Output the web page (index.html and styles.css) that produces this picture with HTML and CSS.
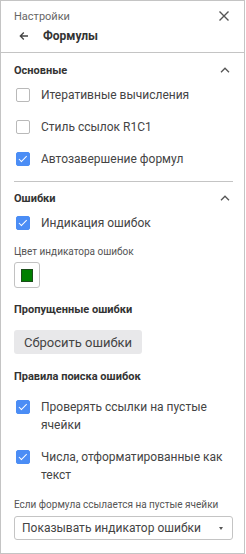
FILE: index.html
```html
<!DOCTYPE html>
<html lang="ru">
<head>
  <meta charset="UTF-8" />
  <meta name="viewport" content="width=device-width, initial-scale=1.0" />
  <title>Настройки — Формулы</title>
  <link rel="stylesheet" href="styles.css">
</head>
<body>
  <div class="panel">
    <div class="header">
      <div class="header-top">
        <span class="caption">Настройки</span>
        <svg class="icon-close" width="12" height="12" viewBox="0 0 12 12">
          <path d="M1.5 1.5L10.5 10.5M10.5 1.5L1.5 10.5" stroke="#555" stroke-width="1.4" fill="none"/>
        </svg>
      </div>
      <div class="header-title">
        <svg class="icon-back" width="10" height="10" viewBox="0 0 10 10">
          <path d="M9 5H1.5M4.8 1.5L1.3 5l3.5 3.5" stroke="#444" stroke-width="1.3" fill="none"/>
        </svg>
        <span class="title">Формулы</span>
      </div>
    </div>

    <div class="content">
      <div class="section">
        <div class="section-head">
          <span>Основные</span>
          <svg class="chevron" width="10" height="6" viewBox="0 0 10 6">
            <path d="M1 5.2L5 1.2l4 4" stroke="#555" stroke-width="1.3" fill="none"/>
          </svg>
        </div>
        <label class="check"><span class="box"></span><span class="check-text">Итеративные вычисления</span></label>
        <label class="check"><span class="box"></span><span class="check-text">Стиль ссылок R1C1</span></label>
        <label class="check"><span class="box checked"></span><span class="check-text">Автозавершение формул</span></label>
      </div>

      <div class="section section-bordered">
        <div class="section-head">
          <span>Ошибки</span>
          <svg class="chevron" width="10" height="6" viewBox="0 0 10 6">
            <path d="M1 5.2L5 1.2l4 4" stroke="#555" stroke-width="1.3" fill="none"/>
          </svg>
        </div>
        <label class="check"><span class="box checked"></span><span class="check-text">Индикация ошибок</span></label>

        <div class="small-label">Цвет индикатора ошибок</div>
        <div class="swatch"><span class="swatch-color"></span></div>

        <div class="sub-head">Пропущенные ошибки</div>
        <button class="btn">Сбросить ошибки</button>

        <div class="sub-head rules-head">Правила поиска ошибок</div>
        <label class="check"><span class="box checked"></span><span class="check-text">Проверять ссылки на пустые ячейки</span></label>
        <label class="check"><span class="box checked"></span><span class="check-text">Числа, отформатированные как текст</span></label>

        <div class="small-label select-label">Если формула ссылается на пустые ячейки</div>
        <div class="select">
          <span>Показывать индикатор ошибки</span>
          <span class="caret"></span>
        </div>
      </div>
    </div>
  </div>
</body>
</html>
```

FILE: styles.css
```css
:root {
  --texto: #444;
  --titulo: #333;
  --borde: #c4c4c4;
  --azul: #4b8df5;
}

* {
  box-sizing: border-box;
}

body {
  margin: 0;
  background: #fff;
  font-family: Roboto, 'Noto Sans', sans-serif;
  color: var(--texto);
}

.panel {
  width: 245px;
  height: 554px;
  border: 1px solid var(--borde);
  background: #fff;
}

.header {
  padding: 7px 0 4px;
  border-bottom: 1px solid var(--borde);
}

.header-top {
  height: 16px;
  display: flex;
  align-items: center;
  justify-content: space-between;
  padding: 0 14px 0 13px;
}

.caption {
  font-size: 11px;
  color: #666;
}

.header-title {
  height: 24px;
  display: flex;
  align-items: center;
  padding-left: 18px;
}

.icon-back {
  margin-right: 14px;
}

.title {
  font-size: 12px;
  font-weight: 700;
  color: var(--titulo);
}

.content {
  padding: 0 11px 0 13px;
}

.section {
  padding-top: 8px;
}

.section-bordered {
  margin-top: 6px;
  border-top: 1px solid var(--borde);
  padding-top: 7px;
}

.section-head {
  height: 18px;
  display: flex;
  align-items: center;
  justify-content: space-between;
  font-size: 11px;
  font-weight: 700;
  color: var(--titulo);
  padding-right: 3px;
}

.check {
  display: flex;
  align-items: flex-start;
  padding: 7px 0;
  font-size: 12px;
  line-height: 18px;
}

.box {
  flex: none;
  width: 14px;
  height: 14px;
  margin: 2px 11px 0 2px;
  border: 1px solid #b9b9b9;
  border-radius: 2px;
  background: #fff;
  position: relative;
}

.box.checked {
  background: var(--azul);
  border-color: var(--azul);
}

.box.checked::after {
  content: "";
  position: absolute;
  left: 4px;
  top: 1px;
  width: 3px;
  height: 6.5px;
  border-right: 1.6px solid #fff;
  border-bottom: 1.6px solid #fff;
  transform: rotate(45deg);
}

.check-text {
  color: var(--texto);
}

.small-label {
  margin-top: 6px;
  height: 14px;
  line-height: 14px;
  font-size: 10px;
  color: #555;
}

.swatch {
  margin-top: 3px;
  width: 26px;
  height: 26px;
  border: 1px solid #c2c2c2;
  border-radius: 3px;
  display: flex;
  align-items: center;
  justify-content: center;
}

.swatch-color {
  width: 12px;
  height: 13px;
  background: #008000;
  border: 1px solid #1b4d1b;
}

.sub-head {
  margin-top: 13px;
  height: 18px;
  line-height: 18px;
  font-size: 11px;
  font-weight: 700;
  color: var(--titulo);
}

.rules-head {
  margin-top: 14px;
  margin-bottom: 5px;
}

.btn {
  display: block;
  margin-top: 11px;
  width: 128px;
  height: 24px;
  border: none;
  border-radius: 3px;
  background: #e8e8ea;
  font-family: inherit;
  font-size: 13px;
  color: #444;
  padding: 0;
}

.select-label {
  margin-top: 7px;
}

.select {
  margin-top: 4px;
  height: 24px;
  border: 1px solid #c4c4c4;
  border-radius: 3px;
  display: flex;
  align-items: center;
  justify-content: space-between;
  padding: 0 9px 0 7px;
  font-size: 12px;
  color: var(--texto);
}

.caret {
  width: 0;
  height: 0;
  border-left: 2.5px solid transparent;
  border-right: 2.5px solid transparent;
  border-top: 3px solid #555;
}
```
